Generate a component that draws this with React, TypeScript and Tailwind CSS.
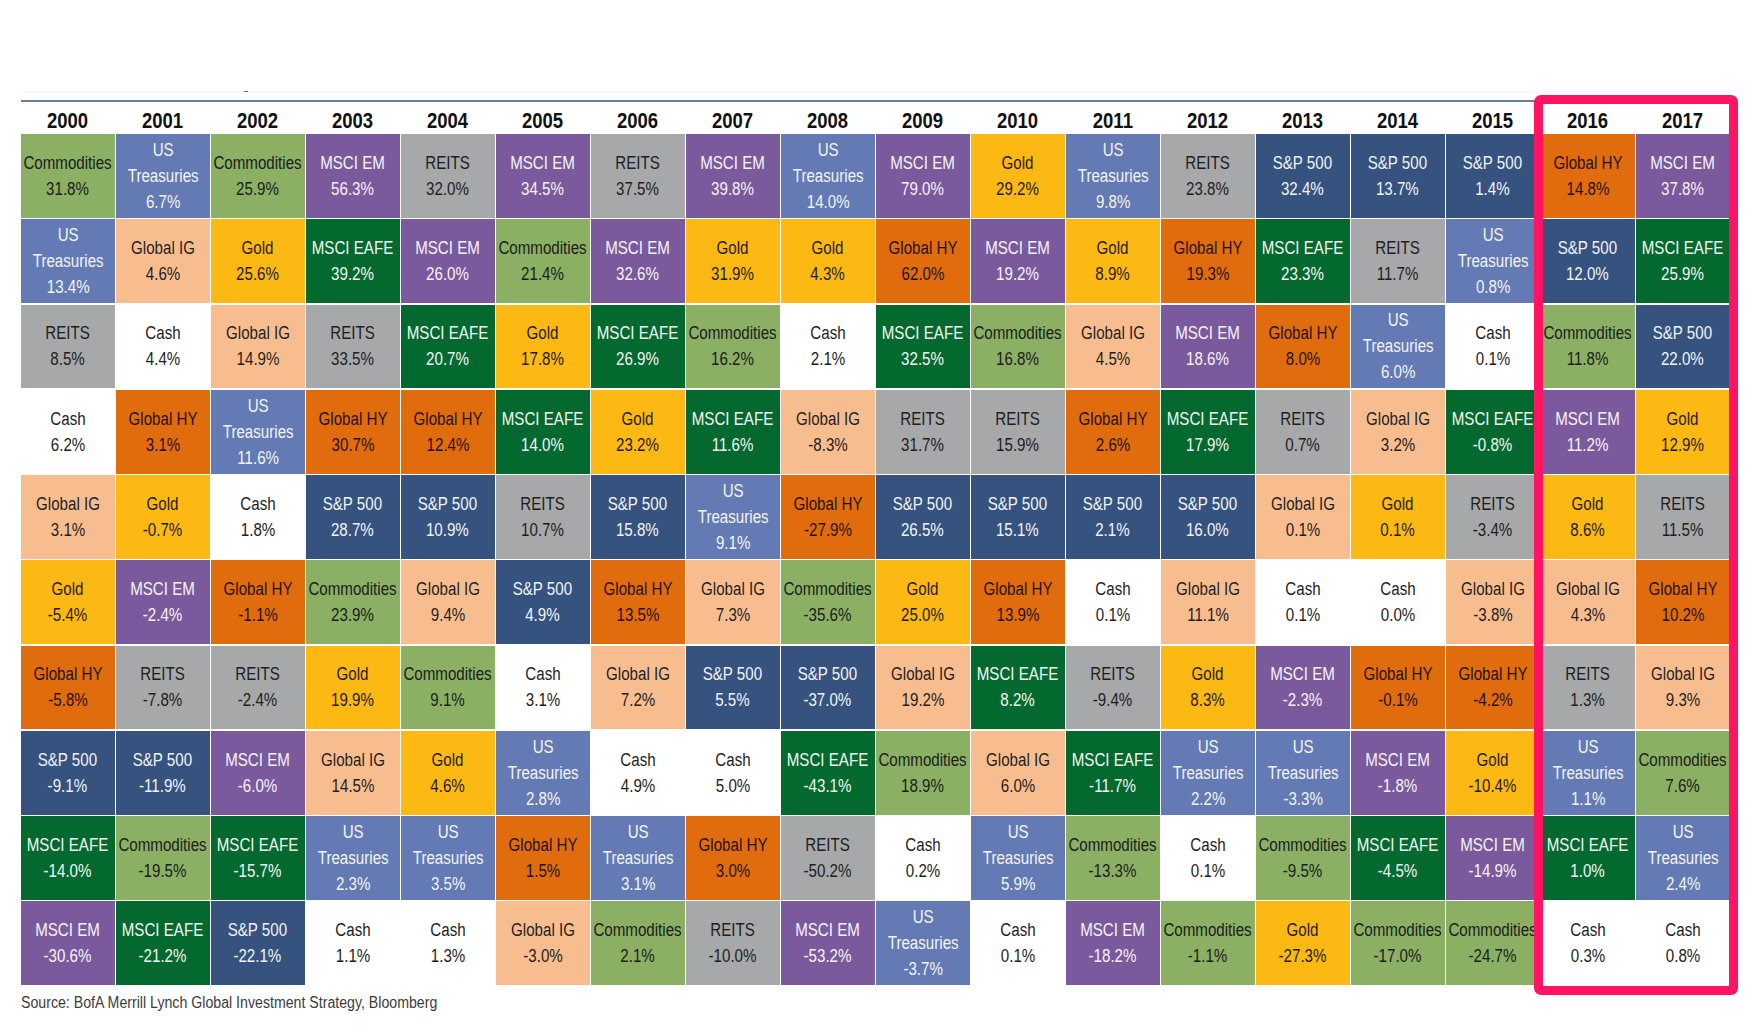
import React from "react";

type Asset =
  | "Commodities"
  | "US Treasuries"
  | "MSCI EM"
  | "REITS"
  | "Global IG"
  | "Gold"
  | "MSCI EAFE"
  | "Global HY"
  | "S&P 500"
  | "Cash";

const styles: Record<Asset, string> = {
  Commodities: "bg-[#8bb063] text-[#1c1c1c]",
  "US Treasuries": "bg-[#637ab4] text-[#f4f4f8]",
  "MSCI EM": "bg-[#7a5a9c] text-[#f6f3f8]",
  REITS: "bg-[#a7a8aa] text-[#1e1e1e]",
  "Global IG": "bg-[#f8bd8f] text-[#1e1e1e]",
  Gold: "bg-[#fdb913] text-[#1e1a10]",
  "MSCI EAFE": "bg-[#04692f] text-[#f2f6f2]",
  "Global HY": "bg-[#e16c0e] text-[#1e1208]",
  "S&P 500": "bg-[#36527f] text-[#f2f4f8]",
  Cash: "bg-white text-[#1e1e1e]",
};

const data: [string, [Asset, string][]][] = [
  ["2000", [["Commodities", "31.8%"], ["US Treasuries", "13.4%"], ["REITS", "8.5%"], ["Cash", "6.2%"], ["Global IG", "3.1%"], ["Gold", "-5.4%"], ["Global HY", "-5.8%"], ["S&P 500", "-9.1%"], ["MSCI EAFE", "-14.0%"], ["MSCI EM", "-30.6%"]]],
  ["2001", [["US Treasuries", "6.7%"], ["Global IG", "4.6%"], ["Cash", "4.4%"], ["Global HY", "3.1%"], ["Gold", "-0.7%"], ["MSCI EM", "-2.4%"], ["REITS", "-7.8%"], ["S&P 500", "-11.9%"], ["Commodities", "-19.5%"], ["MSCI EAFE", "-21.2%"]]],
  ["2002", [["Commodities", "25.9%"], ["Gold", "25.6%"], ["Global IG", "14.9%"], ["US Treasuries", "11.6%"], ["Cash", "1.8%"], ["Global HY", "-1.1%"], ["REITS", "-2.4%"], ["MSCI EM", "-6.0%"], ["MSCI EAFE", "-15.7%"], ["S&P 500", "-22.1%"]]],
  ["2003", [["MSCI EM", "56.3%"], ["MSCI EAFE", "39.2%"], ["REITS", "33.5%"], ["Global HY", "30.7%"], ["S&P 500", "28.7%"], ["Commodities", "23.9%"], ["Gold", "19.9%"], ["Global IG", "14.5%"], ["US Treasuries", "2.3%"], ["Cash", "1.1%"]]],
  ["2004", [["REITS", "32.0%"], ["MSCI EM", "26.0%"], ["MSCI EAFE", "20.7%"], ["Global HY", "12.4%"], ["S&P 500", "10.9%"], ["Global IG", "9.4%"], ["Commodities", "9.1%"], ["Gold", "4.6%"], ["US Treasuries", "3.5%"], ["Cash", "1.3%"]]],
  ["2005", [["MSCI EM", "34.5%"], ["Commodities", "21.4%"], ["Gold", "17.8%"], ["MSCI EAFE", "14.0%"], ["REITS", "10.7%"], ["S&P 500", "4.9%"], ["Cash", "3.1%"], ["US Treasuries", "2.8%"], ["Global HY", "1.5%"], ["Global IG", "-3.0%"]]],
  ["2006", [["REITS", "37.5%"], ["MSCI EM", "32.6%"], ["MSCI EAFE", "26.9%"], ["Gold", "23.2%"], ["S&P 500", "15.8%"], ["Global HY", "13.5%"], ["Global IG", "7.2%"], ["Cash", "4.9%"], ["US Treasuries", "3.1%"], ["Commodities", "2.1%"]]],
  ["2007", [["MSCI EM", "39.8%"], ["Gold", "31.9%"], ["Commodities", "16.2%"], ["MSCI EAFE", "11.6%"], ["US Treasuries", "9.1%"], ["Global IG", "7.3%"], ["S&P 500", "5.5%"], ["Cash", "5.0%"], ["Global HY", "3.0%"], ["REITS", "-10.0%"]]],
  ["2008", [["US Treasuries", "14.0%"], ["Gold", "4.3%"], ["Cash", "2.1%"], ["Global IG", "-8.3%"], ["Global HY", "-27.9%"], ["Commodities", "-35.6%"], ["S&P 500", "-37.0%"], ["MSCI EAFE", "-43.1%"], ["REITS", "-50.2%"], ["MSCI EM", "-53.2%"]]],
  ["2009", [["MSCI EM", "79.0%"], ["Global HY", "62.0%"], ["MSCI EAFE", "32.5%"], ["REITS", "31.7%"], ["S&P 500", "26.5%"], ["Gold", "25.0%"], ["Global IG", "19.2%"], ["Commodities", "18.9%"], ["Cash", "0.2%"], ["US Treasuries", "-3.7%"]]],
  ["2010", [["Gold", "29.2%"], ["MSCI EM", "19.2%"], ["Commodities", "16.8%"], ["REITS", "15.9%"], ["S&P 500", "15.1%"], ["Global HY", "13.9%"], ["MSCI EAFE", "8.2%"], ["Global IG", "6.0%"], ["US Treasuries", "5.9%"], ["Cash", "0.1%"]]],
  ["2011", [["US Treasuries", "9.8%"], ["Gold", "8.9%"], ["Global IG", "4.5%"], ["Global HY", "2.6%"], ["S&P 500", "2.1%"], ["Cash", "0.1%"], ["REITS", "-9.4%"], ["MSCI EAFE", "-11.7%"], ["Commodities", "-13.3%"], ["MSCI EM", "-18.2%"]]],
  ["2012", [["REITS", "23.8%"], ["Global HY", "19.3%"], ["MSCI EM", "18.6%"], ["MSCI EAFE", "17.9%"], ["S&P 500", "16.0%"], ["Global IG", "11.1%"], ["Gold", "8.3%"], ["US Treasuries", "2.2%"], ["Cash", "0.1%"], ["Commodities", "-1.1%"]]],
  ["2013", [["S&P 500", "32.4%"], ["MSCI EAFE", "23.3%"], ["Global HY", "8.0%"], ["REITS", "0.7%"], ["Global IG", "0.1%"], ["Cash", "0.1%"], ["MSCI EM", "-2.3%"], ["US Treasuries", "-3.3%"], ["Commodities", "-9.5%"], ["Gold", "-27.3%"]]],
  ["2014", [["S&P 500", "13.7%"], ["REITS", "11.7%"], ["US Treasuries", "6.0%"], ["Global IG", "3.2%"], ["Gold", "0.1%"], ["Cash", "0.0%"], ["Global HY", "-0.1%"], ["MSCI EM", "-1.8%"], ["MSCI EAFE", "-4.5%"], ["Commodities", "-17.0%"]]],
  ["2015", [["S&P 500", "1.4%"], ["US Treasuries", "0.8%"], ["Cash", "0.1%"], ["MSCI EAFE", "-0.8%"], ["REITS", "-3.4%"], ["Global IG", "-3.8%"], ["Global HY", "-4.2%"], ["Gold", "-10.4%"], ["MSCI EM", "-14.9%"], ["Commodities", "-24.7%"]]],
  ["2016", [["Global HY", "14.8%"], ["S&P 500", "12.0%"], ["Commodities", "11.8%"], ["MSCI EM", "11.2%"], ["Gold", "8.6%"], ["Global IG", "4.3%"], ["REITS", "1.3%"], ["US Treasuries", "1.1%"], ["MSCI EAFE", "1.0%"], ["Cash", "0.3%"]]],
  ["2017", [["MSCI EM", "37.8%"], ["MSCI EAFE", "25.9%"], ["S&P 500", "22.0%"], ["Gold", "12.9%"], ["REITS", "11.5%"], ["Global HY", "10.2%"], ["Global IG", "9.3%"], ["Commodities", "7.6%"], ["US Treasuries", "2.4%"], ["Cash", "0.8%"]]],
];

// Liberation Sans squeezed to the width of Arial Narrow
function Cell({ asset, value }: { asset: Asset; value: string }) {
  const lines = asset === "US Treasuries" ? ["US", "Treasuries"] : [asset];
  return (
    <div className={`h-[83.75px] flex items-center justify-center ${styles[asset]}`}>
      <div className="flex flex-col items-center text-center text-[18px] leading-[26px] whitespace-nowrap scale-x-[0.84] origin-center">
        {lines.map((l) => (
          <span key={l}>{l}</span>
        ))}
        <span>{value}</span>
      </div>
    </div>
  );
}

export default function App() {
  return (
    <div className="w-[1747px] h-[1033px] bg-white relative overflow-hidden pl-[21px] pt-[91px] font-['Liberation_Sans',Arial,sans-serif]">
      <div className="h-[9px] w-[1710px] border-t border-dotted border-[#eceef2]">
        <div className="ml-[223px] -mt-px w-[4px] h-[1px] bg-[#666]" />
      </div>
      <div className="h-[2px] w-[1710px] bg-[#6a7e9d]" />

      <div className="flex gap-x-[1.5px]">
        {data.map(([year, cells]) => (
          <div key={year} className="w-[93.5px] flex flex-col gap-y-[1.5px]">
            <div className="h-[30.5px] flex items-end justify-center">
              <span className="text-[22px] leading-[25px] font-bold text-[#111] scale-x-[0.84]">{year}</span>
            </div>
            {cells.map(([a, v]) => (
              <Cell key={a} asset={a} value={v} />
            ))}
          </div>
        ))}
      </div>

      <div className="mt-[8px] w-max text-[16px] leading-[19px] text-[#3c3c3c] scale-x-[0.885] origin-left">
        Source: BofA Merrill Lynch Global Investment Strategy, Bloomberg
      </div>

      <div className="absolute left-[1534px] top-[95px] w-[204px] h-[900px] border-[9.5px] border-[#ff1464] rounded-[7px] pointer-events-none" />
    </div>
  );
}
